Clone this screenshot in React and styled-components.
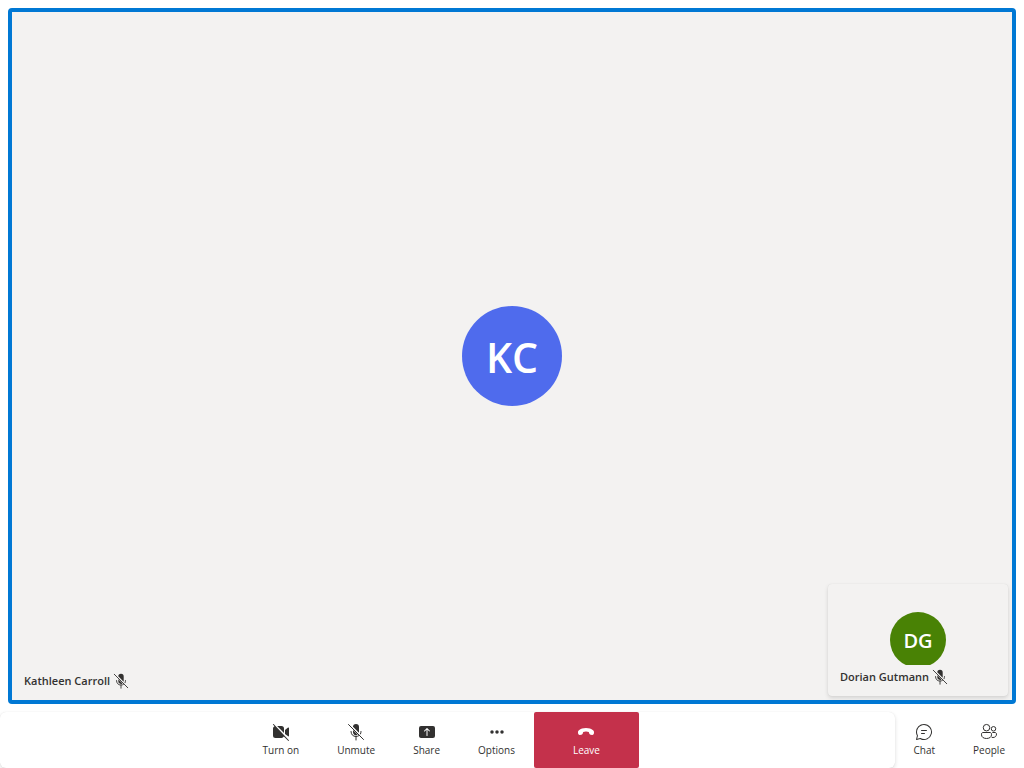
import React from "react";
import styled, { createGlobalStyle } from "styled-components";

const GlobalStyle = createGlobalStyle`
  *, *::before, *::after { box-sizing: border-box; }
  body {
    margin: 0;
    background: #ffffff;
    color: #323130;
    font-family: "Segoe UI", "Open Sans", "Noto Sans", sans-serif;
  }
`;

const Page = styled.div`
  display: flex;
  flex-direction: column;
  min-height: 100vh;
`;

const Stage = styled.main`
  flex: 1;
  display: flex;
  padding: 8px;
`;

const RemoteTile = styled.section`
  position: relative;
  flex: 1;
  display: flex;
  align-items: center;
  justify-content: center;
  background: #f3f2f1;
  border: 4px solid #0078d4;
  border-radius: 4px;
`;

const LocalTile = styled.section`
  position: absolute;
  right: 4px;
  bottom: 4px;
  width: 180px;
  height: 112px;
  display: flex;
  align-items: center;
  justify-content: center;
  background: #f3f2f1;
  border-radius: 4px;
  box-shadow: 0 2px 4px rgba(0, 0, 0, 0.13), 0 0 1px rgba(0, 0, 0, 0.11);
`;

const Avatar = styled.div`
  display: flex;
  align-items: center;
  justify-content: center;
  width: ${(p) => p.$size}px;
  height: ${(p) => p.$size}px;
  padding-top: 2px;
  border-radius: 50%;
  background: ${(p) => p.$color};
  color: #ffffff;
  font-size: ${(p) => p.$text}px;
  font-weight: 600;
  line-height: 1;
`;

const NameTag = styled.div`
  position: absolute;
  left: 8px;
  bottom: 7px;
  display: flex;
  align-items: center;
  gap: 2px;
  height: 24px;
  padding: 0 4px;
  background: #f3f2f1;
  font-size: 11px;
  font-weight: 600;
  line-height: 16px;
  white-space: nowrap;
`;

const Footer = styled.footer`
  display: flex;
  height: 56px;
`;

const ControlBar = styled.div`
  flex: 1;
  display: flex;
  justify-content: center;
  padding-right: 12px;
  background: #ffffff;
  border-radius: 6px;
  box-shadow: 0 2px 4px rgba(0, 0, 0, 0.13), 0 0 1px rgba(0, 0, 0, 0.11);
`;

const SideBar = styled.nav`
  display: flex;
`;

const ControlButton = styled.button`
  display: flex;
  flex-direction: column;
  align-items: center;
  justify-content: center;
  gap: 1px;
  padding: 0 ${(p) => (p.$danger ? 39 : 19)}px 1px;
  border: 0;
  border-radius: 2px;
  background: ${(p) => (p.$danger ? "#c4314b" : "transparent")};
  color: ${(p) => (p.$danger ? "#ffffff" : "#323130")};
  font-family: inherit;
  font-size: 10px;
  line-height: 14px;
  white-space: nowrap;
  cursor: pointer;
`;

const Icon = styled.svg.attrs({ viewBox: "0 0 20 20", "aria-hidden": true })`
  display: block;
  width: ${(p) => p.$size || 20}px;
  height: ${(p) => p.$size || 20}px;
  fill: currentColor;
`;

const CameraOffIcon = () => (
  <Icon>
    <path d="M2.85 2.15a.5.5 0 1 0-.7.7l1.3 1.31A2.5 2.5 0 0 0 2 6.5v7A2.5 2.5 0 0 0 4.5 16h6a2.5 2.5 0 0 0 2.34-1.45l4.3 4.3a.5.5 0 0 0 .71-.7l-15-16ZM13 10.88 6.12 4h4.38A2.5 2.5 0 0 1 13 6.5v4.38Zm1 1V7.93l2.76-2.3A.75.75 0 0 1 18 6.2v7.6c0 .37-.23.62-.5.72L14 11.88Z" />
  </Icon>
);

const MicOffIcon = ({ size }) => (
  <Icon $size={size}>
    <path d="M7 4.7V5a3 3 0 0 1 6 0v5c0 .25-.03.5-.09.72L7 4.7ZM7 8l4.7 4.7A3 3 0 0 1 7 10.2V8Z" />
    <path
      d="M2.5 2.5l15 15M5 9.5c0 3 2 5 5 5 1.1 0 2-.3 2.8-.8M15 9.5c0 .9-.2 1.7-.5 2.4M10 14.5V18"
      fill="none"
      stroke="currentColor"
      strokeLinecap="round"
    />
  </Icon>
);

const ShareIcon = () => (
  <Icon>
    <path
      fillRule="evenodd"
      d="M4 4a2 2 0 0 0-2 2v8c0 1.1.9 2 2 2h12a2 2 0 0 0 2-2V6a2 2 0 0 0-2-2H4Zm6.35 2.15 2.5 2.5a.5.5 0 0 1-.7.7L10.5 7.71v5.79a.5.5 0 0 1-1 0V7.7L7.85 9.36a.5.5 0 1 1-.7-.7l2.5-2.5c.2-.2.5-.2.7 0Z"
    />
  </Icon>
);

const MoreIcon = () => (
  <Icon>
    <circle cx="5" cy="10" r="1.75" />
    <circle cx="10" cy="10" r="1.75" />
    <circle cx="15" cy="10" r="1.75" />
  </Icon>
);

const HangUpIcon = () => (
  <Icon>
    <path d="m18 10.63-.12.98c-.12.82-.86 1.37-1.67 1.28l-1.63-.25a1.6 1.6 0 0 1-1.32-1.12l-.47-1.6A7.5 7.5 0 0 0 10 9.5a7.5 7.5 0 0 0-2.79.42l-.47 1.6a1.6 1.6 0 0 1-1.32 1.12l-1.63.25c-.81.09-1.55-.46-1.67-1.28L2 10.63c-.12-.97.22-1.9.95-2.5C4.7 6.7 7.05 6 10 6s5.3.7 7.05 2.13c.73.6 1.07 1.53.95 2.5Z" />
  </Icon>
);

const ChatIcon = () => (
  <Icon>
    <path d="M10 2a8 8 0 1 1-3.61 15.14l-.12-.07-3.65.92a.5.5 0 0 1-.62-.45v-.08l.01-.08.92-3.64-.07-.12a7.95 7.95 0 0 1-.83-2.9l-.02-.37L2 10a8 8 0 0 1 8-8Zm0 1a7 7 0 0 0-6.1 10.42.5.5 0 0 1 .06.28l-.02.1-.75 3.01 3.02-.75a.5.5 0 0 1 .19-.01l.09.02.09.04A7 7 0 1 0 10 3Zm.5 8a.5.5 0 0 1 .09 1H7.5a.5.5 0 0 1-.09-1h3.09Zm2-3a.5.5 0 0 1 .09 1H7.5a.5.5 0 0 1-.09-1h5.09Z" />
  </Icon>
);

const PeopleIcon = () => (
  <Icon>
    <g fill="none" stroke="currentColor">
      <circle cx="7.5" cy="5.7" r="3.25" />
      <circle cx="14.5" cy="6.8" r="2.25" />
      <path d="M4 10.5h7c.83 0 1.5.67 1.5 1.5v.8c0 2.2-2 3.7-5 3.7s-5-1.5-5-3.7V12c0-.83.67-1.5 1.5-1.5ZM13.3 10.5H16c.83 0 1.5.67 1.5 1.5 0 2.2-1.4 3.5-3.5 3.5-.5 0-.9-.05-1.3-.15" />
    </g>
  </Icon>
);

const controls = [
  { label: "Turn on", Glyph: CameraOffIcon },
  { label: "Unmute", Glyph: MicOffIcon },
  { label: "Share", Glyph: ShareIcon },
  { label: "Options", Glyph: MoreIcon },
  { label: "Leave", Glyph: HangUpIcon, danger: true },
];

const sideControls = [
  { label: "Chat", Glyph: ChatIcon },
  { label: "People", Glyph: PeopleIcon },
];

const renderControl = ({ label, Glyph, danger }) => (
  <ControlButton key={label} type="button" $danger={danger}>
    <Glyph />
    <span>{label}</span>
  </ControlButton>
);

export default function App() {
  return (
    <Page>
      <GlobalStyle />
      <Stage>
        <RemoteTile aria-label="Kathleen Carroll">
          <Avatar $size={100} $text={41} $color="#4f6bed">KC</Avatar>
          <NameTag>
            <span>Kathleen Carroll</span>
            <MicOffIcon size={18} />
          </NameTag>
          <LocalTile aria-label="Dorian Gutmann">
            <Avatar $size={56} $text={20} $color="#498205">DG</Avatar>
            <NameTag>
              <span>Dorian Gutmann</span>
              <MicOffIcon size={18} />
            </NameTag>
          </LocalTile>
        </RemoteTile>
      </Stage>
      <Footer>
        <ControlBar>{controls.map(renderControl)}</ControlBar>
        <SideBar aria-label="Side panels">{sideControls.map(renderControl)}</SideBar>
      </Footer>
    </Page>
  );
}
